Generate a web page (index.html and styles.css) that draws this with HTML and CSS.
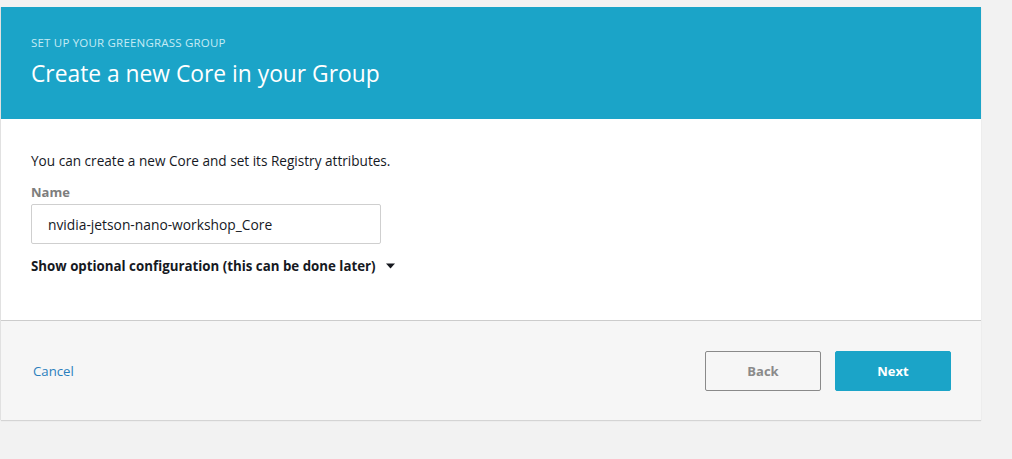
FILE: index.html
```html
<!DOCTYPE html>
<html>
<head>
<meta charset="utf-8">
<link rel="stylesheet" href="styles.css">
</head>
<body>
<div class="card">
  <div class="header">
    <div class="eyebrow">SET UP YOUR GREENGRASS GROUP</div>
    <h1 class="title">Create a new Core in your Group</h1>
  </div>
  <div class="body">
    <p class="intro">You can create a new Core and set its Registry attributes.</p>
    <label class="label">Name</label>
    <div class="input">nvidia-jetson-nano-workshop_Core</div>
    <div class="toggle">Show optional configuration (this can be done later)
      <svg class="caret" width="9" height="6" viewBox="0 0 9 6"><path d="M0 0.5 L9 0.5 L4.5 5.5 Z" fill="#16191f"/></svg>
    </div>
  </div>
  <div class="footer">
    <a class="cancel">Cancel</a>
    <div class="actions">
      <button class="btn btn-back">Back</button>
      <button class="btn btn-next">Next</button>
    </div>
  </div>
</div>
</body>
</html>
```
FILE: styles.css
```css
html, body { margin: 0; padding: 0; }
body {
  background: #f2f2f2;
  font-family: "Open Sans", "Liberation Sans", sans-serif;
  padding-top: 7px;
  width: 1012px;
  height: 459px;
  overflow: hidden;
}
.card {
  width: 980px;
  margin-left: 1px;
  background: #fff;
  box-shadow: 0 1px 1px rgba(0,0,0,0.12), -1px 0 0 #e6e6e6;
}
.header {
  background: #1ba4c8;
  height: 112px;
  padding: 30px 30px 0 30px;
  box-sizing: border-box;
}
.eyebrow {
  color: #c5ebf5;
  font-size: 11.5px;
  line-height: 12px;
  letter-spacing: 0.2px;
}
.title {
  margin: 12px 0 0 0;
  color: #fff;
  font-weight: 400;
  font-size: 22.8px;
  line-height: 26px;
}
.body {
  padding: 34px 30px 0 30px;
  height: 202px;
  box-sizing: border-box;
  border-bottom: 1px solid #cccccc;
}
.intro {
  margin: 0;
  font-size: 13.6px;
  line-height: 16px;
  color: #16191f;
}
.label {
  display: block;
  margin-top: 15px;
  font-size: 13px;
  line-height: 16px;
  font-weight: 700;
  color: #7d7d7d;
}
.input {
  margin-top: 4px;
  width: 350px;
  height: 40px;
  box-sizing: border-box;
  border: 1px solid #cfcfcf;
  border-radius: 2px;
  padding: 0 16px;
  display: flex;
  align-items: center;
  font-size: 13.8px;
  color: #16191f;
}
.toggle {
  margin-top: 14px;
  font-size: 13.3px;
  line-height: 16px;
  font-weight: 700;
  color: #16191f;
  display: flex;
  align-items: center;
  gap: 10px;
}
.footer {
  background: #f6f6f6;
  height: 99px;
  box-sizing: border-box;
  display: flex;
  align-items: center;
  justify-content: space-between;
  padding: 0 30px 0 32px;
}
.cancel {
  color: #2b7fbd;
  font-size: 13.2px;
}
.actions { display: flex; gap: 14px; }
.btn {
  width: 116px;
  height: 40px;
  font-family: inherit;
  font-weight: 700;
  font-size: 13px;
  border-radius: 2px;
  cursor: pointer;
}
.btn-back {
  background: transparent;
  border: 1px solid #8a8a8a;
  color: #8a8a8a;
}
.btn-next {
  background: #1ba4c8;
  border: 1px solid #1ba4c8;
  color: #fff;
}
```
